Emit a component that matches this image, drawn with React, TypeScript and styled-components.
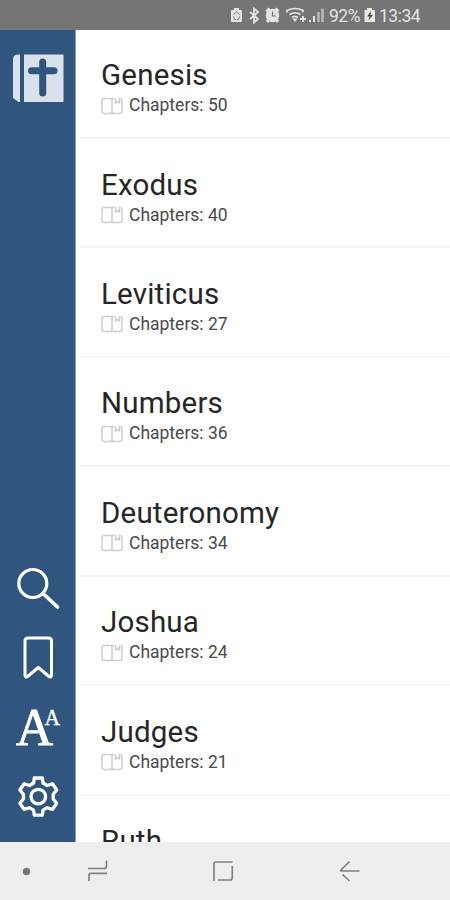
import React from 'react';
import styled, { createGlobalStyle } from 'styled-components';

const GlobalStyle = createGlobalStyle`
  * { box-sizing: border-box; }
  html, body { margin: 0; padding: 0; background: #fff; overflow: hidden; }
  body { font-family: Roboto, "Liberation Sans", sans-serif; }
`;

const Screen = styled.div`
  display: flex;
  flex-direction: column;
  width: 450px;
  height: 900px;
  overflow: hidden;
  background: #fff;
`;

const StatusBar = styled.header`
  display: flex;
  flex: none;
  align-items: center;
  height: 29.5px;
  padding: 2px 0 0 230px;
  background: #757575;
  color: #e4e4e4;
`;

const StatusText = styled.span<{ $width: number }>`
  width: ${(p) => p.$width}px;
  font-size: 17.5px;
  line-height: 20px;
  letter-spacing: -0.5px;
  white-space: nowrap;
`;

const Main = styled.div`
  display: flex;
  flex: none;
  height: 812.5px;
`;

const Sidebar = styled.nav`
  display: flex;
  flex-direction: column;
  flex: none;
  justify-content: space-between;
  width: 76px;
  padding: 23.5px 0 20px;
  background: #30567f;
  border-right: 1px solid #7f9dbb;
`;

const ToolGroup = styled.div`
  display: flex;
  flex-direction: column;
`;

const ToolButton = styled.button<{ $height: number }>`
  display: flex;
  align-items: flex-start;
  width: 75px;
  height: ${(p) => p.$height}px;
  padding: 0;
  border: 0;
  background: none;
`;

const Icon = styled.svg`
  display: block;
  flex: none;
`;

const BookList = styled.main`
  flex: 1;
  padding-left: 4px;
  overflow: hidden;
`;

const BookRow = styled.article`
  height: 109.45px;
  padding: 25.6px 0 0 21px;
  border-bottom: 2px solid #f4f4f4;
`;

const BookTitle = styled.h2`
  margin: 0;
  color: #262626;
  font-size: 29.5px;
  font-weight: 400;
  line-height: 40px;
  letter-spacing: 0.2px;
`;

const ChapterLine = styled.div`
  display: flex;
  align-items: center;
  gap: 6px;
  height: 21px;
  color: #4a4a4a;
  font-size: 17.5px;
  line-height: 21px;
`;

const NavBar = styled.footer`
  display: flex;
  flex: none;
  align-items: center;
  height: 58px;
  padding-left: 22px;
  background: #eee;
`;

const NavSlot = styled.div<{ $width: number }>`
  width: ${(p) => p.$width}px;
`;

const books = [
  { name: 'Genesis', chapters: 50 },
  { name: 'Exodus', chapters: 40 },
  { name: 'Leviticus', chapters: 27 },
  { name: 'Numbers', chapters: 36 },
  { name: 'Deuteronomy', chapters: 34 },
  { name: 'Joshua', chapters: 24 },
  { name: 'Judges', chapters: 21 },
];

const StatusIcons = () => (
  <Icon width="99" height="20" viewBox="230 6 99 20">
    <path d="M234 8h5v2h2q1 0 1 1v10q0 1-1 1h-9q-1 0-1-1V11q0-1 1-1h2z" fill="#e4e4e4" />
    <path d="M233.5 14.500l3-2.500 3 2.500M233.500 16.500l1 3h1.500m3.500-3l-1 3h-1.500" fill="none" stroke="#757575" strokeWidth="1" />
    <path d="M250 12l8 7-4 3.5V8.500l4 3.500-8 7" fill="none" stroke="#e4e4e4" strokeWidth="1.8" />
    <path d="M266.500 11.500l3-3M278.500 11.500l-3-3M268.500 20l-1.500 2M276.500 20l1.500 2" stroke="#e4e4e4" strokeWidth="3" />
    <circle cx="272.500" cy="15.500" r="6.700" fill="#e4e4e4" />
    <path d="M272.500 11.500v4.500h3.500" fill="none" stroke="#757575" strokeWidth="1.200" />
    <path d="M287 12.500V10.500q8-4 16 0V12.500M289.500 14.500q5.500-3.500 11 0M292 17.500q3-2 6 0" fill="none" stroke="#e4e4e4" strokeWidth="1.700" />
    <path d="M292.500 18.500h5l-2.500 3.500z" fill="#e4e4e4" />
    <path d="M300 19h6M303 16v6" fill="none" stroke="#e4e4e4" strokeWidth="1.800" />
    <path d="M310 20v2M314 16v6" stroke="#e4e4e4" strokeWidth="2" />
    <path d="M318.500 12v10M322.500 8.500v13.500" stroke="#b9b9b9" strokeWidth="2.500" />
  </Icon>
);

const BatteryIcon = () => (
  <Icon width="16" height="20" viewBox="363 6 16 20">
    <path d="M367 8h5v2h3v12h-10.500V10h2.500z" fill="#e9e9e9" />
    <path d="M371 11l-4 5.500h2.500l-1 4 4.500-5.500h-2.500z" fill="#4d4d4d" />
  </Icon>
);

const BibleIcon = () => (
  <Icon width="75" height="52" viewBox="0 53 75 52">
    <path d="M17.500 54.500H20V102H18.500L13 98V59q0-4 4.500-4.500z" fill="#d9e2ec" />
    <path d="M24 54.500H63.500V102H24z" fill="#d9e2ec" />
    <path d="M42.700 62V93M31.500 70.800H54" stroke="#30567f" strokeWidth="7" strokeLinecap="round" />
  </Icon>
);

const SearchIcon = () => (
  <Icon width="75" height="44" viewBox="0 566 75 44">
    <circle cx="32.800" cy="583.500" r="14" fill="none" stroke="#fff" strokeWidth="3.200" />
    <path d="M43 593.500l14.500 13.500" stroke="#fff" strokeWidth="3.700" strokeLinecap="round" />
  </Icon>
);

const BookmarkIcon = () => (
  <Icon width="75" height="46" viewBox="0 635 75 46">
    <path
      d="M25 675V641q0-3 3-3H48.500q3 0 3 3V675q0 3-2.500 1.500L38.300 667.500 27.500 676.500Q25 678 25 675z"
      fill="none" stroke="#fff" strokeWidth="3" strokeLinejoin="round"
    />
  </Icon>
);

const FontSizeIcon = () => (
  <Icon width="75" height="52" viewBox="0 706 75 52" fill="#fff" stroke="#fff" fontFamily="Liberation Serif, serif">
    <text x="16" y="745" fontSize="53" strokeWidth="0.900" textLength="37" lengthAdjust="spacingAndGlyphs">A</text>
    <text x="44.500" y="724.500" fontSize="22.500" strokeWidth="0.400" textLength="15.500" lengthAdjust="spacingAndGlyphs">A</text>
  </Icon>
);

const GearIcon = () => (
  <Icon width="75" height="46" viewBox="0 774 75 46">
    <path
      d="M34.300 778H42.300L43 783L47.200 785.500L52.500 783.800L56.700 790L53.200 794.300V799L56.700 803.300L52.500 809.400L47.200 807.700L43 810.200L42.300 815.200H34.300L33.600 810.200L29.400 807.700L24.100 809.400L19.900 803.300L23.400 799V794.300L19.900 790L24.100 783.800L29.400 785.500L33.600 783z"
      fill="none" stroke="#fff" strokeWidth="3.300" strokeLinejoin="round"
    />
    <circle cx="38.300" cy="796.600" r="7.300" fill="none" stroke="#fff" strokeWidth="3.300" />
  </Icon>
);

const ChapterIcon = () => (
  <Icon width="22" height="18" viewBox="0 0 22 18" fill="none" stroke="#cdcdcd" strokeWidth="1.500">
    <path d="M13 1.500H3Q1 1.500 1 3.500V14.500Q1 16.500 3 16.500H8.500Q11 16.500 11 14.500Q11 16.500 13 16.500H19Q21 16.500 21 14.500V3.500Q21 1.500 19.500 1.500M11 2V15" />
    <path d="M14.500 1V6L16.500 4.500L18.500 6V1" />
  </Icon>
);

const strokeProps = { fill: 'none', stroke: '#808080', strokeWidth: 1.7 };

const App = () => (
  <>
    <GlobalStyle />
    <Screen>
      <StatusBar>
        <StatusIcons />
        <StatusText $width={34}>92%</StatusText>
        <BatteryIcon />
        <StatusText $width={45}>13:34</StatusText>
      </StatusBar>
      <Main>
        <Sidebar>
          <BibleIcon />
          <ToolGroup>
            <ToolButton $height={69} aria-label="Search"><SearchIcon /></ToolButton>
            <ToolButton $height={71} aria-label="Bookmarks"><BookmarkIcon /></ToolButton>
            <ToolButton $height={68} aria-label="Text size"><FontSizeIcon /></ToolButton>
            <ToolButton $height={48} aria-label="Settings"><GearIcon /></ToolButton>
          </ToolGroup>
        </Sidebar>
        <BookList>
          {books.map((book) => (
            <BookRow key={book.name}>
              <BookTitle>{book.name}</BookTitle>
              <ChapterLine>
                <ChapterIcon />
                <span>Chapters: {book.chapters}</span>
              </ChapterLine>
            </BookRow>
          ))}
          <BookRow>
            <BookTitle>Ruth</BookTitle>
          </BookRow>
        </BookList>
      </Main>
      <NavBar>
        <NavSlot $width={64}>
          <Icon width="9" height="9" viewBox="0 0 9 9"><circle cx="4.500" cy="4.500" r="3.700" fill="#777" /></Icon>
        </NavSlot>
        <NavSlot $width={126}>
          <Icon width="24" height="24" viewBox="86 859 24 24" {...strokeProps}>
            <path d="M88 868.500H104Q106.500 868.500 106.500 866V860.500M107 873.300H91Q89 873.300 89 875.500V881" />
          </Icon>
        </NavSlot>
        <NavSlot $width={126}>
          <Icon width="24" height="24" viewBox="212 859 24 24" {...strokeProps}>
            <path d="M214 881V864Q214 862 216 862H232.500M232.300 866V877.500Q232.300 880 230 880H218" />
          </Icon>
        </NavSlot>
        <Icon width="24" height="24" viewBox="338 859 24 24" {...strokeProps}>
          <path d="M359.500 871H341Q340 871 341 870L349.500 861.500M342.500 874.500L349.500 881" />
        </Icon>
      </NavBar>
    </Screen>
  </>
);

export default App;
